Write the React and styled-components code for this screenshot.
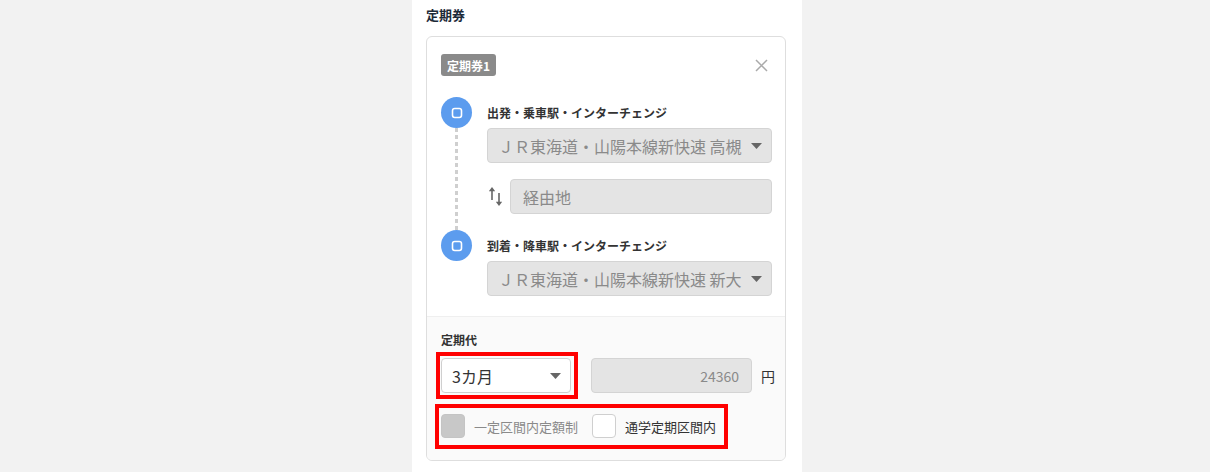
import styled, { createGlobalStyle } from "styled-components";

const GlobalStyle = createGlobalStyle`
  html, body { margin: 0; padding: 0; background: #f2f2f2; }
  body {
    font-family: "Noto Sans CJK JP", "Noto Sans", "Liberation Sans", sans-serif;
    color: #333;
  }
  * { box-sizing: border-box; }
`;

const stops = [
  {
    label: "出発・乗車駅・インターチェンジ",
    value: "ＪＲ東海道・山陽本線新快速 高槻",
  },
  {
    label: "到着・降車駅・インターチェンジ",
    value: "ＪＲ東海道・山陽本線新快速 新大阪",
  },
];

const Caret = () => (
  <svg width="11" height="6" viewBox="0 0 11 6">
    <path d="M0 0 H11 L5.5 6 Z" fill="#666" />
  </svg>
);

const StopIcon = () => (
  <svg width="12" height="12" viewBox="0 0 12 12">
    <rect x="1.5" y="1.5" width="9" height="9" rx="2.2" fill="none" stroke="#fff" strokeWidth="1.6" />
  </svg>
);

const SwapIcon = () => (
  <svg width="15" height="19" viewBox="0 0 15 19">
    <path d="M4 3.5 V13" stroke="#666" strokeWidth="1.6" />
    <path d="M4 0 L7.2 4.2 H0.8 Z" fill="#666" />
    <path d="M11 6 V15.5" stroke="#666" strokeWidth="1.6" />
    <path d="M11 19 L7.8 14.8 H14.2 Z" fill="#666" />
  </svg>
);

const CloseIcon = () => (
  <svg width="13" height="13" viewBox="0 0 13 13">
    <path d="M1 1 L12 12 M12 1 L1 12" stroke="#aaa" strokeWidth="1.5" />
  </svg>
);

export default function App() {
  const [first, last] = stops;
  return (
    <>
      <GlobalStyle />
      <Panel>
        <Heading>定期券</Heading>
        <Card>
          <TopSection>
            <CardHeader>
              <Badge>定期券1</Badge>
              <CloseButton aria-label="close">
                <CloseIcon />
              </CloseButton>
            </CardHeader>
            <Route>
              <Marker $row={1}>
                <StopIcon />
              </Marker>
              <StopLabel $row={1}>{first.label}</StopLabel>
              <Select $row={2} $width="100%">
                <SelectText $muted>{first.value}</SelectText>
                <Caret />
              </Select>
              <Connector />
              <ViaRow>
                <SwapBox>
                  <SwapIcon />
                </SwapBox>
                <Field $align="left">経由地</Field>
              </ViaRow>
              <Marker $row={4}>
                <StopIcon />
              </Marker>
              <StopLabel $row={4}>{last.label}</StopLabel>
              <Select $row={5} $width="100%">
                <SelectText $muted>{last.value}</SelectText>
                <Caret />
              </Select>
            </Route>
          </TopSection>
          <PriceSection>
            <SectionLabel>定期代</SectionLabel>
            <PriceRow>
              <Highlight $inset="-6px -7px -6px -5px">
                <Select $white $width="130px">
                  <SelectText>3カ月</SelectText>
                  <Caret />
                </Select>
              </Highlight>
              <Field $align="right" $width="161px" $small>
                24360
              </Field>
              <Unit>円</Unit>
            </PriceRow>
            <Highlight $inset="-10px -12px -11px -6px" $top="21px">
              <CheckRow>
                <Check $disabled />
                <CheckLabel $disabled>一定区間内定額制</CheckLabel>
                <Check $gap="14px" />
                <CheckLabel>通学定期区間内</CheckLabel>
              </CheckRow>
            </Highlight>
          </PriceSection>
        </Card>
      </Panel>
    </>
  );
}

const Panel = styled.div`
  width: 390px;
  min-height: 100vh;
  margin-left: calc(50% - 193px);
  padding: 6px 16px 0 14px;
  background: #fff;
`;

const Heading = styled.h2`
  margin: 0 0 12px;
  font-size: 13px;
  line-height: 18px;
  font-weight: 700;
  color: #1d2a38;
`;

const Card = styled.div`
  border: 1px solid #dedede;
  border-radius: 6px;
  overflow: hidden;
  background: #fff;
`;

const TopSection = styled.div`
  padding: 17px 13px 20px 14px;
`;

const CardHeader = styled.div`
  display: flex;
  align-items: center;
  justify-content: space-between;
  height: 22px;
`;

const Badge = styled.span`
  display: inline-flex;
  align-items: center;
  height: 22px;
  padding: 0 6px;
  border-radius: 3px;
  background: #8a8a8a;
  color: #fff;
  font-size: 12px;
  font-weight: 700;
`;

const CloseButton = styled.button`
  display: flex;
  padding: 0;
  margin-right: 4px;
  border: 0;
  background: none;
  cursor: pointer;
`;

const Route = styled.div`
  display: grid;
  grid-template-columns: 31px minmax(0, 1fr);
  grid-template-rows: 31px 35px 67px 31px 35px;
  column-gap: 15px;
  margin-top: 21px;
`;

const Marker = styled.div`
  grid-column: 1;
  grid-row: ${(p) => p.$row};
  display: flex;
  align-items: center;
  justify-content: center;
  width: 31px;
  height: 31px;
  border-radius: 50%;
  background: #5c9cee;
`;

const StopLabel = styled.div`
  grid-column: 2;
  grid-row: ${(p) => p.$row};
  align-self: center;
  font-size: 12px;
  line-height: 18px;
  font-weight: 700;
  color: #333;
`;

const Connector = styled.div`
  grid-column: 1;
  grid-row: 2 / 4;
  justify-self: center;
  width: 3px;
  background: repeating-linear-gradient(
    to bottom,
    #cfcfcf 0 4px,
    transparent 4px 7px
  );
`;

const Select = styled.div`
  grid-column: 2;
  grid-row: ${(p) => p.$row || "auto"};
  display: flex;
  align-items: center;
  width: ${(p) => p.$width};
  min-width: 0;
  height: 35px;
  padding: 0 9px 0 10px;
  border: 1px solid ${(p) => (p.$white ? "#cfcfcf" : "#d4d4d4")};
  border-radius: 4px;
  background: ${(p) => (p.$white ? "#fff" : "#e4e4e4")};
`;

const SelectText = styled.span`
  flex: 1;
  min-width: 0;
  overflow: hidden;
  white-space: nowrap;
  margin-right: 9px;
  font-size: 16px;
  color: ${(p) => (p.$muted ? "#8a8a8a" : "#333")};
`;

const ViaRow = styled.div`
  grid-column: 2;
  grid-row: 3;
  align-self: center;
  display: flex;
  align-items: center;
`;

const SwapBox = styled.div`
  display: flex;
  width: 23px;
  padding-left: 1px;
`;

const Field = styled.div`
  display: flex;
  align-items: center;
  justify-content: ${(p) => (p.$align === "right" ? "flex-end" : "flex-start")};
  flex: ${(p) => (p.$width ? "none" : "1")};
  width: ${(p) => p.$width || "auto"};
  height: 35px;
  padding: 0 12px;
  border: 1px solid #d4d4d4;
  border-radius: 4px;
  background: #e4e4e4;
  font-size: ${(p) => (p.$small ? "14px" : "16px")};
  color: #8a8a8a;
`;

const PriceSection = styled.div`
  padding: 14px 13px 22px 14px;
  border-top: 1px solid #efefef;
  background: #fafafa;
`;

const SectionLabel = styled.div`
  font-size: 12px;
  line-height: 18px;
  font-weight: 700;
  color: #333;
`;

const PriceRow = styled.div`
  display: flex;
  align-items: center;
  gap: 20px;
  margin-top: 9px;
`;

const Unit = styled.span`
  margin-left: -11px;
  font-size: 14px;
  color: #333;
`;

const Highlight = styled.div`
  position: relative;
  width: fit-content;
  margin-top: ${(p) => p.$top || "0"};

  &::after {
    content: "";
    position: absolute;
    inset: ${(p) => p.$inset};
    border: 4px solid #ff0000;
    pointer-events: none;
  }
`;

const CheckRow = styled.div`
  display: flex;
  align-items: center;
`;

const Check = styled.span`
  width: 24px;
  height: 24px;
  margin-left: ${(p) => p.$gap || "0"};
  border: 1px solid ${(p) => (p.$disabled ? "#c4c4c4" : "#cfcfcf")};
  border-radius: 4px;
  background: ${(p) => (p.$disabled ? "#c8c8c8" : "#fff")};
`;

const CheckLabel = styled.span`
  margin-left: 9px;
  font-size: 13px;
  color: ${(p) => (p.$disabled ? "#8a8a8a" : "#333")};
`;
